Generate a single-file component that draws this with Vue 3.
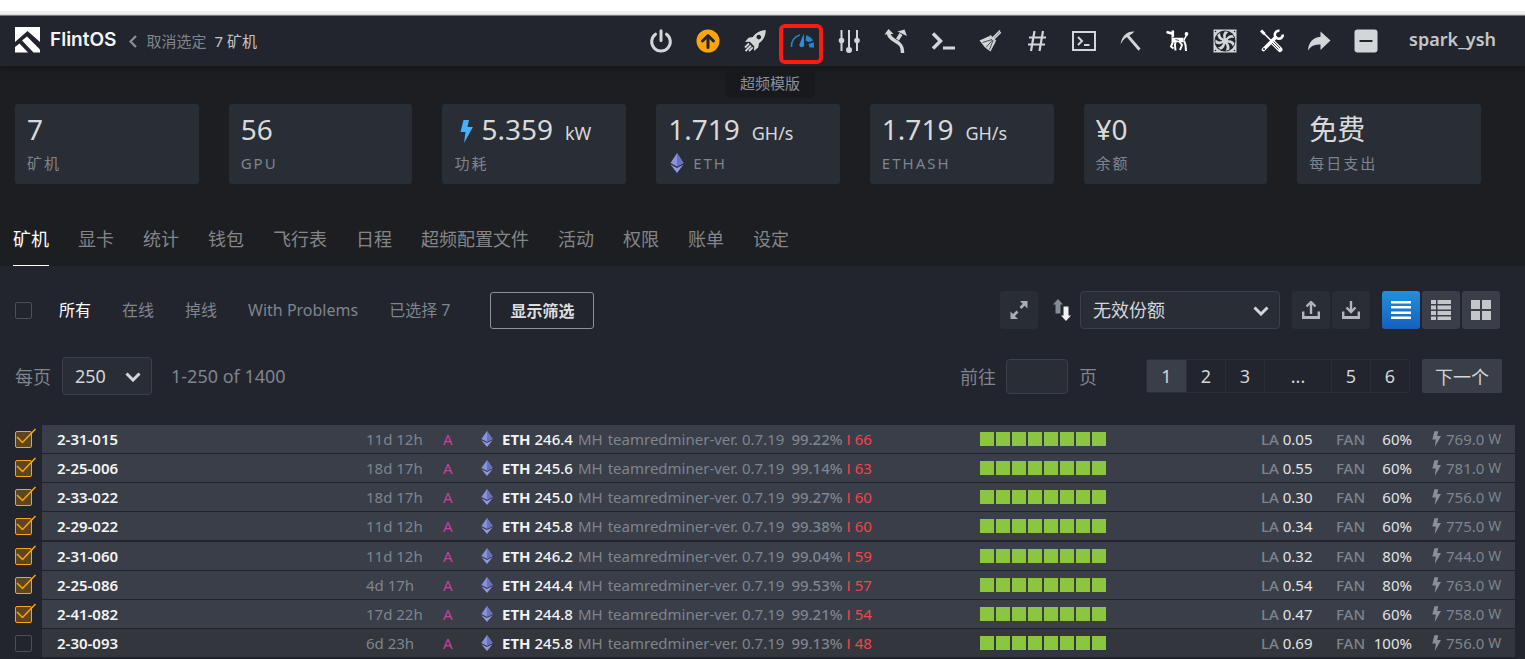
<script setup>
import { ref } from 'vue'

const stats = [
  { value: '7', label: '矿机' },
  { value: '56', label: 'GPU' },
  { value: '5.359', unit: 'kW', label: '功耗', bolt: true },
  { value: '1.719', unit: 'GH/s', label: 'ETH', coin: true },
  { value: '1.719', unit: 'GH/s', label: 'ETHASH' },
  { value: '¥0', label: '余额' },
  { value: '免费', label: '每日支出' },
]

const tabs = ['矿机', '显卡', '统计', '钱包', '飞行表', '日程', '超频配置文件', '活动', '权限', '账单', '设定']
const filters = ['所有', '在线', '掉线', 'With Problems', '已选择 7']
const pages = ['1', '2', '3', '...', '5', '6']

const rigs = ref([
  { name: '2-31-015', up: '11d 12h', hash: '246.4', ratio: '99.22%', bad: 66, la: '0.05', fan: '60%', watts: '769.0', on: true },
  { name: '2-25-006', up: '18d 17h', hash: '245.6', ratio: '99.14%', bad: 63, la: '0.55', fan: '60%', watts: '781.0', on: true },
  { name: '2-33-022', up: '18d 17h', hash: '245.0', ratio: '99.27%', bad: 60, la: '0.30', fan: '60%', watts: '756.0', on: true },
  { name: '2-29-022', up: '11d 12h', hash: '245.8', ratio: '99.38%', bad: 60, la: '0.34', fan: '60%', watts: '775.0', on: true },
  { name: '2-31-060', up: '11d 12h', hash: '246.2', ratio: '99.04%', bad: 59, la: '0.32', fan: '80%', watts: '744.0', on: true },
  { name: '2-25-086', up: '4d 17h', hash: '244.4', ratio: '99.53%', bad: 57, la: '0.54', fan: '80%', watts: '763.0', on: true },
  { name: '2-41-082', up: '17d 22h', hash: '244.8', ratio: '99.21%', bad: 54, la: '0.47', fan: '60%', watts: '758.0', on: true },
  { name: '2-30-093', up: '6d 23h', hash: '245.8', ratio: '99.13%', bad: 48, la: '0.69', fan: '100%', watts: '756.0', on: false },
])
</script>

<template>
  <div class="app">
    <header class="bar">
      <a class="brand" href="#">
        <svg width="26" height="26" viewBox="0 0 26 26" fill="#fff">
          <path d="M0 0H25V15L12.500 4L0 15Z" />
          <path d="M0 20L4.500 16.500L13 25.500H0Z" />
          <path d="M7 13.500L12 9.500L25 22.500V25.500H18.500Z" />
        </svg>
        <span>FlintOS</span>
      </a>
      <button class="deselect">
        <svg width="10" height="13" viewBox="0 0 10 13" fill="none" stroke="#8a8f98" stroke-width="2.200"><path d="M8 1L2.500 6.500L8 12" /></svg>
        <span>取消选定</span><span class="count">7 矿机</span>
      </button>

      <nav class="tools">
        <button aria-label="电源"><svg viewBox="0 0 24 24" fill="none" stroke="currentColor" stroke-width="3" stroke-linecap="round"><path d="M6.500 5.200A9.300 9.300 0 1 0 17.500 5.200M12 1.800V11.500" /></svg></button>
        <button aria-label="升级"><svg viewBox="0 0 24 24"><circle cx="12" cy="12" r="11.500" fill="#ffa50a" /><path d="M12 18.500V7M6.500 12L12 6.500L17.500 12" fill="none" stroke="#22252d" stroke-width="3" stroke-linecap="round" stroke-linejoin="round" /></svg></button>
        <button aria-label="启动"><svg viewBox="0 0 24 24" fill="currentColor"><path fill-rule="evenodd" d="M22.800 1C17 1.200 12.500 3.600 9.800 8L5.500 8.800L2 13L6.800 12.800L11.200 17.200L11 22L15.200 18.500L16 14.200C20.400 11.500 22.600 7 22.800 1ZM15.800 5.800A2.300 2.300 0 1 1 15.790 5.800Z" /><path d="M6 14.500L2 18.500M8 16.500L2.500 22M9.800 18.300L6 22" stroke="currentColor" stroke-width="1.800" /></svg></button>
        <span class="hot">
          <button aria-label="超频模版" aria-describedby="oc-tip"><svg class="gauge" viewBox="0 0 24 24"><path d="M1.500 18A11 11 0 0 1 10 6" fill="none" stroke="#2385d0" stroke-width="1.600" /><path d="M16.200 6.200L15.500 11.500L19 13.200L23.200 11.500A12 12 0 0 0 16.200 6.200ZM18.500 15L23.800 13.200L24 18.500H19.500Z" fill="#2385d0" /><path d="M13.800 4.500L14.200 16.500A2.600 2.600 0 0 1 9.200 16Z" fill="#2b8fdc" /></svg></button>
          <span class="ring"></span>
          <span id="oc-tip" class="tip" role="tooltip">超频模版</span>
        </span>
        <button aria-label="调整"><svg viewBox="0 0 24 24" fill="currentColor" stroke="currentColor" stroke-width="2"><path d="M4.500 1V22M12 1V22M20 1V22" /><circle cx="4.500" cy="11.500" r="1.800" /><circle cx="12" cy="21" r="2" /><circle cx="20" cy="11.500" r="1.800" /></svg></button>
        <button aria-label="分流"><svg viewBox="0 0 24 24" fill="none" stroke="currentColor" stroke-width="3.500"><path d="M4.500 4C5 10 11 11 15 14.500C18 17 18.500 19 18.500 24M13.500 10.500L17 5" /><path d="M0.500 5.500L4.500 0L9.500 5Z M13.500 2.500L20.500 0.500L23 7Z" fill="currentColor" stroke="none" /></svg></button>
        <button aria-label="命令"><svg viewBox="0 0 24 24" fill="none" stroke="currentColor"><path d="M2 4.500L9.500 12L2 19.500" stroke-width="3.500" /><path d="M12 19H24" stroke-width="3" /></svg></button>
        <button aria-label="清理"><svg viewBox="0 0 24 24" fill="none" stroke="currentColor" stroke-width="1.500"><path d="M14 9.500L22 1.500M15.500 10.500L22.800 3.300" /><path d="M11.500 7L17.500 13L12.500 22.500L7 18.500L1.500 11.500Z" fill="currentColor" stroke="none" /><path d="M14 10.500L4.500 13.500M14.500 11L8 18.500M15 11.500L11.500 20.500" stroke="#22252d" stroke-width="0.800" /><path d="M12 6.500L17.800 12.300" /></svg></button>
        <button aria-label="哈希"><svg viewBox="0 0 24 24" fill="none" stroke="currentColor" stroke-width="2.200"><path d="M9.500 2L6 22M18 2L14.500 22M4 8.500H21M3 15.500H20" /></svg></button>
        <button aria-label="控制台"><svg viewBox="0 0 24 24" fill="none" stroke="currentColor" stroke-width="2"><rect x="1" y="3" width="22" height="18" /><path d="M6 8L10 12L6 16M12 16H17.500" /></svg></button>
        <button aria-label="矿工"><svg viewBox="0 0 24 24" fill="currentColor"><path d="M15.500 2.500C8.500 2 3 6 1.500 15.500C4 11 5.500 9.500 8 8L12 5.500C12.500 5 14 4 15.500 2.500Z" /><path d="M6.500 6.500L8.500 4.500L21.500 19.500L19.500 21.800Z" /></svg></button>
        <button aria-label="看门狗" class="bright"><svg viewBox="0 0 24 24" fill="none" stroke="currentColor"><path d="M0.500 3L6 4.500M6.800 1.500V9" stroke-width="2.600" /><path d="M5.500 11H17.500" stroke-width="4.500" /><path d="M18 11L20.500 6" stroke-width="1.600" /><circle cx="20.500" cy="5" r="1.900" fill="currentColor" stroke="none" /><path d="M9.500 12L9 16.500L9.500 21.500M7 13L5 17.500L7.500 19.500M13 12L16 16L14 21M18 11.500L19.500 16L20 22" stroke-width="2" /><path d="M9.500 10.500L13 11.500M6.500 8.500L8.500 8" stroke="#22252d" stroke-width="0.800" /></svg></button>
        <button aria-label="风扇"><svg viewBox="0 0 24 24"><rect x="0.500" y="0.500" width="23" height="23" fill="currentColor" /><circle cx="12" cy="12" r="10.500" fill="#22252d" /><g fill="currentColor"><path v-for="n in 7" :key="n" :transform="`rotate(${n * 51.4} 12 12)`" d="M11 10C9.500 7 10 4.500 12 2.200L15.500 3C12.800 5 12.300 7 13 10Z" /><circle cx="12" cy="12" r="3" /></g><g fill="#22252d"><circle cx="2.500" cy="2.500" r="0.800" /><circle cx="21.500" cy="2.500" r="0.800" /><circle cx="2.500" cy="21.500" r="0.800" /><circle cx="21.500" cy="21.500" r="0.800" /></g></svg></button>
        <button aria-label="工具" class="bright"><svg viewBox="0 0 24 24" fill="none" stroke="currentColor"><path d="M3.500 20.500L15.500 8.500" stroke-width="3.600" stroke-linecap="round" /><path d="M19.500 1.800A4 4 0 1 0 22.800 5.500" stroke-width="2.600" /><path d="M2.500 3L11 11.500" stroke-width="1.600" /><path d="M1 1.500L4.500 5" stroke-width="3" /><path d="M12.500 13L20 20.500" stroke-width="5" stroke-linecap="round" /><path d="M13.500 12.500L20 19M12 14L18.500 20.500" stroke="#22252d" stroke-width="0.800" /><circle cx="4" cy="20" r="1" fill="#22252d" stroke="none" /></svg></button>
        <button aria-label="转移"><svg viewBox="0 0 24 24" fill="currentColor"><path d="M13.500 2.500L23.500 11.500L13.500 21V15.500C7.500 15 3.500 17 1 21.500C1.500 13.500 6 8.500 13.500 7.800Z" /></svg></button>
        <button aria-label="移除"><svg viewBox="0 0 24 24"><rect x="0.500" y="0.500" width="23" height="23" rx="3" fill="currentColor" /><path d="M5.500 12H18.500" stroke="#22252d" stroke-width="2" /></svg></button>
      </nav>
      <a class="user" href="#">spark_ysh</a>
    </header>

    <section class="stats">
      <div v-for="(s, i) in stats" :key="i" class="card">
        <div class="value">
          <svg v-if="s.bolt" class="bolt-big" width="13" height="24" viewBox="0 0 13 24"><path d="M3.500 0H9L7.500 7H13L4 23L5.500 12H0.500Z" fill="#45b0fb" /></svg>
          <span>{{ s.value }}</span><small v-if="s.unit">{{ s.unit }}</small>
        </div>
        <div class="label">
          <svg v-if="s.coin" class="coin" width="14" height="20" viewBox="0 0 14 20"><path d="M7 0L13.500 10L7 13.500L0.500 10Z" fill="#8a92dc" /><path d="M7 0V13.500L13.500 10Z" fill="#6771c4" /><path d="M0.500 11.500L7 15L13.500 11.500L7 20Z" fill="#8f98e0" /></svg>
          <span>{{ s.label }}</span>
        </div>
      </div>
    </section>

    <nav class="tabs">
      <a v-for="(t, i) in tabs" :key="t" href="#" :class="{ active: i === 0 }">{{ t }}</a>
    </nav>

    <main class="panel">
      <div class="row">
        <input class="box" type="checkbox" aria-label="全选" />
        <div class="filters">
          <a v-for="(f, i) in filters" :key="f" href="#" :class="{ active: i === 0 }">{{ f }}</a>
        </div>
        <button class="outline">显示筛选</button>
        <div class="right">
          <button class="sq" aria-label="展开"><svg width="18" height="20" viewBox="0 0 18 20" fill="#a9adb3"><path d="M10 1H17.500V8.500ZM0.500 11.500V19H8Z" /><path d="M14.500 4L10.500 8M7.500 11.500L3.500 15.500" stroke="#a9adb3" stroke-width="2.800" /></svg></button>
          <button class="sort" aria-label="排序"><svg width="18" height="22" viewBox="0 0 18 22"><path d="M5 0L10 5.500H7.500V14.500H2.500V5.500H0Z" fill="#868b93" /><path d="M13 22L18 16.500H15.500V7.500H10.500V16.500H8Z" fill="#f2f2f2" /></svg></button>
          <div class="pick wide">
            <select aria-label="排序方式"><option>无效份额</option></select>
            <svg width="16" height="10" viewBox="0 0 16 10" fill="none" stroke="#d3d5d8" stroke-width="3"><path d="M1.500 1.500L8 8L14.500 1.500" /></svg>
          </div>
          <button class="sq up" aria-label="上传"><svg width="18" height="18" viewBox="0 0 18 18" fill="none" stroke="#b3b6ba"><path d="M1 10.500V16.500H17V10.500" stroke-width="2.800" /><path d="M9 13V3" stroke-width="2.400" /><path d="M4.500 5.500L9 1L13.500 5.500" stroke-width="2.400" /></svg></button>
          <button class="sq down" aria-label="下载"><svg width="18" height="18" viewBox="0 0 18 18" fill="none" stroke="#b3b6ba"><path d="M1 10.500V16.500H17V10.500" stroke-width="2.800" /><path d="M9 0V10" stroke-width="2.400" /><path d="M4.500 6.500L9 11L13.500 6.500" stroke-width="2.400" /></svg></button>
          <div class="views">
            <button class="sq on" aria-label="列表"><svg width="20" height="18" viewBox="0 0 20 18" stroke="#fff" stroke-width="2.400"><path d="M0 1.200H20M0 6.200H20M0 11.700H20M0 16.800H20" /></svg></button>
            <button class="sq alt" aria-label="详情"><svg width="20" height="20" viewBox="0 0 20 20" stroke="#c4c6c9"><path d="M0 2H5M0 7.500H5M0 13H5M0 18.500H5M6.500 2H20M6.500 7.500H20M6.500 13H20M6.500 18.500H20" stroke-width="3.800" /></svg></button>
            <button class="sq alt" aria-label="网格"><svg width="20" height="20" viewBox="0 0 20 20" fill="#c4c6c9"><path d="M0 0H9V9H0ZM11 0H20V9H11ZM0 11H9V20H0ZM11 11H20V20H11Z" /></svg></button>
          </div>
        </div>
      </div>

      <div class="row paging">
        <label for="per">每页</label>
        <div class="pick small">
          <select id="per"><option>250</option></select>
          <svg width="16" height="10" viewBox="0 0 16 10" fill="none" stroke="#d3d5d8" stroke-width="3"><path d="M1.500 1.500L8 8L14.500 1.500" /></svg>
        </div>
        <span class="range">1-250 of 1400</span>
        <div class="right">
          <label for="goto">前往</label>
          <input id="goto" class="goto" type="text" />
          <span>页</span>
          <div class="pages">
            <button v-for="(p, i) in pages" :key="p" :class="{ current: i === 0, dots: p === '...' }">{{ p }}</button>
          </div>
          <button class="next">下一个</button>
        </div>
      </div>

      <table class="rigs">
        <colgroup>
          <col class="c-check" /><col /><col class="c-up" /><col class="c-a" /><col class="c-coin" /><col class="c-miner" />
          <col class="c-gpu" /><col class="c-la" /><col class="c-fan" /><col class="c-watt" />
        </colgroup>
        <tbody>
          <tr v-for="r in rigs" :key="r.name" :class="{ picked: r.on }">
            <td class="check">
              <label class="tick">
                <input v-model="r.on" class="box" type="checkbox" :aria-label="r.name" />
                <svg v-if="r.on" width="22" height="18" viewBox="0 0 22 18" fill="none" stroke="#ffa50a" stroke-width="1.500"><path d="M2 9L7.500 14.500L20.500 1" /></svg>
              </label>
            </td>
            <td class="name">{{ r.name }}</td>
            <td>{{ r.up }}</td>
            <td class="amd">A</td>
            <td><svg class="coin" width="12" height="16" viewBox="0 0 14 20"><path d="M7 0L14 10L7 13.500L0 10Z" fill="#8a92dc" /><path d="M7 0V13.500L14 10Z" fill="#6771c4" /><path d="M0 11.500L7 15L14 11.500L7 20Z" fill="#8f98e0" /></svg></td>
            <td>
              <div class="miner">
                <b>ETH</b><span class="hash">{{ r.hash }}</span><span class="mh">MH</span>
                <span class="soft">teamredminer-ver. 0.7.19</span><span class="ratio">{{ r.ratio }}</span><span class="bad"><span class="mark">I</span> {{ r.bad }}</span>
              </div>
            </td>
            <td><div class="gpus"><i v-for="n in 8" :key="n"></i></div></td>
            <td><span class="key">LA</span> <span class="val">{{ r.la }}</span></td>
            <td><div class="fan"><span class="key">FAN</span><span class="val">{{ r.fan }}</span></div></td>
            <td><div class="watt"><svg width="9" height="17" viewBox="0 0 13 24"><path d="M3.500 0H9L7.500 7H13L4 23L5.500 12H0.500Z" fill="#8b8f98" /></svg><span>{{ r.watts }}</span><small>W</small></div></td>
          </tr>
        </tbody>
      </table>
    </main>
  </div>
</template>

<style>
body { background: #22252d; }
</style>

<style scoped>
* { box-sizing: border-box; }
.app {
  min-height: 100vh;
  background: #1d1e22;
  color: #7f848e;
  font-family: "Noto Sans", "Noto Sans CJK SC", sans-serif;
  font-size: 15px;
  display: flex;
  flex-direction: column;
}
button, select, input { font: inherit; color: inherit; margin: 0; }
button { border: 0; padding: 0; background: none; display: flex; align-items: center; justify-content: center; cursor: pointer; }
a { color: inherit; text-decoration: none; }
svg { display: block; }

.bar {
  height: 66px;
  background: linear-gradient(#fff 11px, #f0f0f0 11px, #f0f0f0 14px, #c9cdcd 15px, #22252d 16px);
  box-shadow: 0 2px 8px #141518;
  display: flex;
  align-items: center;
  padding: 16px 29px 0 15px;
}
.brand { display: flex; align-items: center; gap: 9px; color: #fff; font: 600 19px/26px Inter, sans-serif; padding-bottom: 3px; }
.brand span { color: #f4f4f4; }
.deselect { gap: 8px; margin-left: 12px; color: #7f848e; line-height: 20px; }
.deselect .count { color: #c4c6c9; }
.tools { display: flex; margin-left: auto; color: #d3d6d8; }
.tools button { width: 47px; height: 50px; }
.tools svg { width: 24px; height: 24px; }
.tools .bright { color: #fff; }
.hot { position: relative; }
.ring { position: absolute; left: 1px; top: 8px; width: 44px; height: 40px; border: 4px solid #fb1d12; border-radius: 6px; pointer-events: none; }
.tip {
  position: absolute;
  top: 52px;
  right: 10px;
  padding: 0 15px;
  line-height: 30px;
  background: #18191d;
  border-radius: 5px;
  white-space: nowrap;
  color: #8a8f98;
}
.user { margin-left: 20px; font-size: 18px; font-weight: 600; color: #c4c6c9; line-height: 24px; padding-bottom: 4px; }

.stats { display: grid; grid-template-columns: repeat(7, 1fr); gap: 30px; padding: 38px 44px 0 15px; }
.card { height: 80px; background: #292d35; border-radius: 3px; padding: 6px 12px; }
.value { display: flex; align-items: baseline; height: 39px; font-size: 28px; line-height: 38px; color: #d8d9da; white-space: nowrap; }
.value small { font-size: 18px; line-height: 24px; margin-left: 12px; }
.bolt-big { align-self: center; margin: 4px 8px 0 6px; }
.label { display: flex; align-items: center; font-size: 15px; line-height: 28px; letter-spacing: 2px; }
.label .coin { margin: 0 9px 0 2px; }

.tabs { display: flex; gap: 29px; padding: 30px 13px 0; font-size: 18px; line-height: 51px; color: #848688; }
.tabs a { border-bottom: 1px solid transparent; }
.tabs .active { color: #fff; border-color: #fff; }

.panel { flex: 1; background: #22252d; padding: 25px 10px 0 15px; }
.row { display: flex; align-items: center; height: 38px; }
.right { display: flex; align-items: center; margin-left: auto; }
.box { appearance: none; display: block; width: 17px; height: 17px; border: 1px solid #4b4f58; border-radius: 2px; }
.filters { display: flex; gap: 31px; margin-left: 27px; font-size: 16px; line-height: 24px; }
.filters .active { color: #fff; }
.outline { height: 37px; padding: 0 19px; margin-left: 40px; border: 1px solid #8d9095; border-radius: 3px; color: #dcdddf; font-size: 16px; font-weight: 600; }
.row .right { padding-right: 15px; }
.sq { width: 38px; height: 38px; border-radius: 3px; background: #292d35; }
.sort { margin: 0 9px 0 15px; }
.pick { position: relative; height: 38px; }
.pick select { appearance: none; width: 100%; height: 100%; border: 1px solid #3b404c; border-radius: 4px; background: #292d35; color: #d3d5d8; padding: 0 12px; font-size: 18px; }
.pick svg { position: absolute; right: 11px; top: 15px; pointer-events: none; }
.wide { width: 200px; }
.small { width: 90px; margin: 0 19px 0 11px; }
.up { margin: 0 2px 0 12px; }
.views { display: flex; gap: 2px; margin-left: 12px; }
.on { background: linear-gradient(#2190dc, #1561bd); }
.alt { background: #393e49; }

.paging { margin-top: 28px; font-size: 18px; }
.paging .right { padding-right: 13px; }
.goto { width: 62px; height: 35px; margin: 0 11px 0 10px; border: 1px solid #3b404c; border-radius: 4px; background: #292d35; padding: 0 8px; }
.pages { display: flex; margin: 0 12px 0 49px; border: 1px solid #2b2e37; border-radius: 2px; color: #d3d5d8; }
.pages button { width: 39px; height: 32px; border-left: 1px solid #2b2e37; }
.pages button:first-child { border-left: 0; }
.pages .dots { width: 67px; }
.pages .current { background: #393e49; }
.next { height: 34px; padding: 0 13px; background: #393e49; border-radius: 2px; color: #d3d5d8; }

.rigs { width: 100%; margin-top: 30px; table-layout: fixed; border-collapse: separate; border-spacing: 0; line-height: 20px; }
.c-check { width: 27px; }
.c-up { width: 77px; }
.c-a { width: 38px; }
.c-coin { width: 21px; }
.c-miner { width: 478px; }
.c-gpu { width: 281px; }
.c-la { width: 75px; }
.c-fan { width: 96px; }
.c-watt { width: 83px; }
td { height: 29px; padding: 0; background: #33373d; border-bottom: 1px solid #20232a; white-space: nowrap; }
tr:nth-child(4n) td { height: 30px; border-bottom-width: 2px; }
.picked td { background: #393e49; }
.rigs td.check { background: none; }
.tick { position: relative; display: block; }
.tick svg { position: absolute; left: 0; top: -3px; pointer-events: none; }
.picked .box { background: #5e4521; border-color: #ffa50a; }
td.name { padding-left: 15px; color: #f4f4f4; font-weight: 600; }
.amd { color: #c8409c; }
.miner { display: flex; }
.miner b { color: #f4f4f4; margin-right: 4px; }
.hash { color: #f4f4f4; font-weight: 500; margin-right: 5px; }
.mh { margin-right: 5px; }
.ratio { margin: 0 4px 0 7px; font-weight: 500; }
.bad { color: #f4434a; }
.mark { font-family: "Liberation Sans", sans-serif; }
.gpus { display: flex; gap: 2px; }
.gpus i { width: 14px; height: 14px; background: #8ac640; }
.key { font-weight: 500; }
.val { color: #e2e3e4; }
.fan { display: flex; justify-content: space-between; padding-right: 20px; }
.watt { display: flex; align-items: center; }
.watt span { margin: 0 4px 0 5px; }
.watt small { font-size: 14px; }
</style>
